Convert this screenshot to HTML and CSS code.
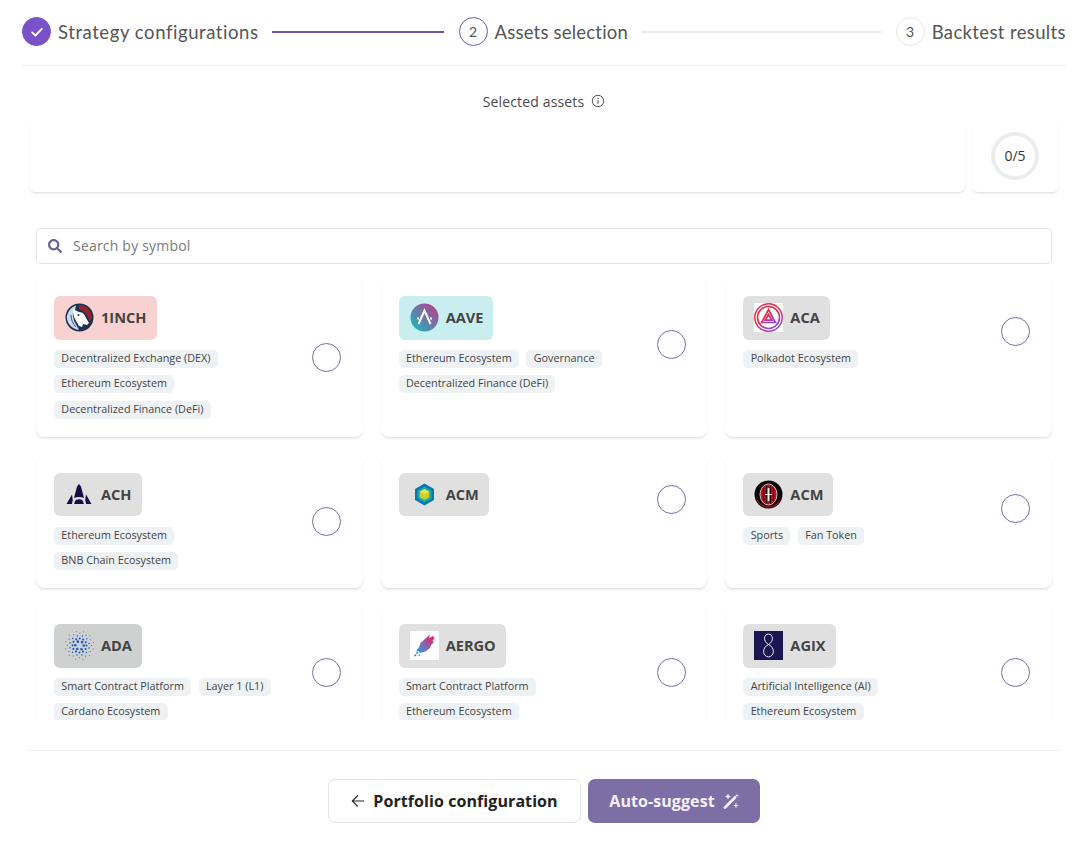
FILE: index.html
```html
<!DOCTYPE html>
<html lang="en">
<head>
<meta charset="utf-8">
<title>Assets selection</title>
<link rel="stylesheet" href="styles.css">
</head>
<body>
<main class="page">
  <nav class="stepper">
    <div class="step">
      <span class="step-dot step-dot--done">
        <svg viewBox="0 0 14 14" width="14" height="14"><path d="M2.2 7.4l3.2 3.1 6.4-6.6" fill="none" stroke="#fff" stroke-width="1.9" stroke-linecap="round" stroke-linejoin="round"/></svg>
      </span>
      <span class="step-label step-label--wide">Strategy configurations</span>
    </div>
    <span class="step-line step-line--done"></span>
    <div class="step">
      <span class="step-dot step-dot--active">2</span>
      <span class="step-label">Assets selection</span>
    </div>
    <span class="step-line"></span>
    <div class="step">
      <span class="step-dot">3</span>
      <span class="step-label step-label--mid">Backtest results</span>
    </div>
  </nav>

  <div class="selected-title">
    <span>Selected assets</span>
    <svg class="info" viewBox="0 0 14 14" width="14" height="14"><circle cx="7" cy="7" r="5.7" fill="none" stroke="#555" stroke-width="1"/><path d="M7 6.2v3.6" stroke="#555" stroke-width="1.1"/><circle cx="7" cy="4.3" r=".7" fill="#555"/></svg>
  </div>

  <section class="selected-row">
    <div class="panel panel--list"></div>
    <div class="panel panel--count"><span class="ring">0/5</span></div>
  </section>

  <label class="search">
    <svg viewBox="0 0 512 512" width="14" height="14"><path fill="#6e6395" d="M505 442.700L405.300 343c-4.500-4.500-10.600-7-17-7H372c27.600-35.300 44-79.700 44-128C416 93.100 322.900 0 208 0S0 93.100 0 208s93.100 208 208 208c48.300 0 92.700-16.400 128-44v16.300c0 6.400 2.500 12.500 7 17l99.700 99.700c9.400 9.400 24.600 9.400 33.900 0l28.300-28.300c9.400-9.400 9.400-24.600.1-34zM208 336c-70.700 0-128-57.200-128-128 0-70.700 57.200-128 128-128 70.700 0 128 57.200 128 128 0 70.700-57.200 128-128 128z"/></svg>
    <span class="search-placeholder">Search by symbol</span>
  </label>

  <section class="assets">
    <div class="asset-grid">

      <article class="card">
        <div class="card-main">
          <div class="card-info">
            <div class="badge badge--pink">
              <svg class="coin" viewBox="0 0 29 29"><circle cx="14.5" cy="14.5" r="14" fill="#1b314f"/><path d="M1.800 14.500C2.300 9 6 4 11 2.500l-1 4.500-2 5 1 6 5 8.800C7 26.500 2.300 20.500 1.800 14.500z" fill="#c9dcec"/><path d="M8 6l6 3c4 0 6 3 7 6l3 5-2 2-4-1-1 3-3-1-3-5-2-4z" fill="#fff"/><path d="M14 2C20 1 26.500 7 27 14l-2 5C23 13 20 8 14 6z" fill="#94242b"/><circle cx="13.500" cy="12" r="1" fill="#1b314f"/><path d="M6 12c0 5 2 9 5 12" stroke="#1b314f" stroke-width=".8" fill="none"/></svg>
              <span class="badge-name">1INCH</span>
            </div>
            <div class="tags">
              <span class="tag">Decentralized Exchange (DEX)</span>
              <span class="tag">Ethereum Ecosystem</span>
              <span class="tag">Decentralized Finance (DeFi)</span>
            </div>
          </div>
          <span class="radio"></span>
        </div>
      </article>

      <article class="card">
        <div class="card-main">
          <div class="card-info">
            <div class="badge badge--teal">
              <svg class="coin" viewBox="0 0 29 29"><defs><linearGradient id="aave" x1="1" y1="0" x2="0" y2="1"><stop offset=".1" stop-color="#b6408f"/><stop offset=".9" stop-color="#1fb3bf"/></linearGradient></defs><circle cx="14.5" cy="14.5" r="14" fill="url(#aave)"/><path d="M8.500 21L14.500 7.500l6 13.500M7 15.500h2M20 15.500h2" fill="none" stroke="#fff" stroke-width="2"/></svg>
              <span class="badge-name">AAVE</span>
            </div>
            <div class="tags">
              <span class="tag">Ethereum Ecosystem</span>
              <span class="tag">Governance</span>
              <span class="tag">Decentralized Finance (DeFi)</span>
            </div>
          </div>
          <span class="radio"></span>
        </div>
      </article>

      <article class="card">
        <div class="card-main">
          <div class="card-info">
            <div class="badge">
              <svg class="coin" viewBox="0 0 29 29"><defs><linearGradient id="aca" x1="0" y1="0" x2=".6" y2="1"><stop offset=".55" stop-color="#e62a48"/><stop offset="1" stop-color="#9a3fd8"/></linearGradient></defs><rect width="29" height="29" fill="#fff"/><circle cx="14.5" cy="14.5" r="13.700" fill="none" stroke="url(#aca)" stroke-width="1.500"/><circle cx="14.5" cy="14.500" r="11" fill="none" stroke="url(#aca)" stroke-width="1.600"/><path d="M14.500 6.500l6.800 13H7.700zM14.500 11.500l3.200 5.700h-6.400z" fill="none" stroke="url(#aca)" stroke-width="1.700"/></svg>
              <span class="badge-name">ACA</span>
            </div>
            <div class="tags">
              <span class="tag">Polkadot Ecosystem</span>
            </div>
          </div>
          <span class="radio"></span>
        </div>
      </article>

      <article class="card">
        <div class="card-main">
          <div class="card-info">
            <div class="badge">
              <svg class="coin" viewBox="0 0 29 29"><path fill="#140f40" d="M14 4l2 2.500 3 11.500c-3-1.500-7-1.500-10 0l3-11.500zM14 19.300c2 0 3.500.7 4 2l.8 2.700H9.200l.8-2.700c.5-1.300 2-2 4-2zM7 14.500L1.500 24h5.300l1-3.800zM21 14.500L26.500 24h-5.300l-1-3.800z"/></svg>
              <span class="badge-name">ACH</span>
            </div>
            <div class="tags">
              <span class="tag">Ethereum Ecosystem</span>
              <span class="tag">BNB Chain Ecosystem</span>
            </div>
          </div>
          <span class="radio"></span>
        </div>
      </article>

      <article class="card">
        <div class="card-main">
          <div class="card-info">
            <div class="badge">
              <svg class="coin" viewBox="0 0 29 29"><path d="M14.500 3.500l9.500 5.500v11l-9.500 5.500L5 20V9z" fill="#0a78ae"/><path d="M14.500 6.500l7 4v8l-7 4-7-4v-8z" fill="#1ba8a8"/><path d="M14.500 9l4.800 2.800v5.400L14.500 20l-4.800-2.800v-5.400z" fill="#c9cf2f"/><path d="M14.500 9l4.800 2.800-4.800 2.700-4.800-2.700z" fill="#e6e24a"/></svg>
              <span class="badge-name">ACM</span>
            </div>
            <div class="tags"></div>
          </div>
          <span class="radio"></span>
        </div>
      </article>

      <article class="card">
        <div class="card-main">
          <div class="card-info">
            <div class="badge">
              <svg class="coin" viewBox="0 0 29 29"><circle cx="14.5" cy="14.5" r="14" fill="#0a0506"/><path d="M3 20a13 13 0 0 0 23 0" fill="none" stroke="#8e1022" stroke-width="1.500"/><ellipse cx="14.5" cy="14.5" rx="8.500" ry="10.500" fill="#b3122a"/><path d="M9.500 8.500v12M12.500 5.500v18M16.500 5.500v18M19.500 8.500v12" stroke="#1a0507" stroke-width="1.200"/><path d="M14.500 8v13" stroke="#f2e8e0" stroke-width="1.800"/><path d="M11 14.500h7" stroke="#f2e8e0" stroke-width="1"/><ellipse cx="14.5" cy="14.5" rx="8.500" ry="10.500" fill="none" stroke="#e0d4c0" stroke-width=".9"/></svg>
              <span class="badge-name">ACM</span>
            </div>
            <div class="tags">
              <span class="tag">Sports</span>
              <span class="tag">Fan Token</span>
            </div>
          </div>
          <span class="radio"></span>
        </div>
      </article>

      <article class="card">
        <div class="card-main">
          <div class="card-info">
            <div class="badge badge--slate">
              <svg class="coin" viewBox="0 0 29 29"><g fill="none" stroke-linecap="round" stroke="#1a5cc4"><circle cx="14.5" cy="14.5" r="4.200" stroke-width="2.600" stroke-dasharray="0 4.398"/><circle cx="14.5" cy="14.5" r="7" stroke-width="2.100" stroke-dasharray="0 3.665"/><circle cx="14.5" cy="14.5" r="9.800" stroke-width="1.500" stroke-dasharray="0 5.131" stroke-dashoffset="2.565"/><circle cx="14.5" cy="14.5" r="12.200" stroke-width="1.100" stroke-dasharray="0 6.388"/><circle cx="14.5" cy="14.5" r="14.200" stroke-width=".9" stroke-dasharray="0 7.435" stroke-dashoffset="3.717"/></g></svg>
              <span class="badge-name">ADA</span>
            </div>
            <div class="tags">
              <span class="tag">Smart Contract Platform</span>
              <span class="tag">Layer 1 (L1)</span>
              <span class="tag">Cardano Ecosystem</span>
            </div>
          </div>
          <span class="radio"></span>
        </div>
      </article>

      <article class="card">
        <div class="card-main">
          <div class="card-info">
            <div class="badge">
              <svg class="coin" viewBox="0 0 29 29"><defs><linearGradient id="aergo" x1="0" y1="1" x2="1" y2="0"><stop offset=".1" stop-color="#17a7d8"/><stop offset=".5" stop-color="#7f6bb5"/><stop offset=".85" stop-color="#e5286e"/></linearGradient></defs><rect width="29" height="29" fill="#fff"/><path fill="url(#aergo)" d="M20 3.500L19 7l4-2 1.500 2-2 3 1.500 1-3 3-1 3-4.500 3.500L10 22l-1.500-2-2.500.5 3-4.500 1.500-4zM6.500 21l2-.5-.5 2-2 .5zM4 24l2-1 .3 2-2 .5zM8.500 24l1.500-.8v1.500l-1.500.5z"/></svg>
              <span class="badge-name">AERGO</span>
            </div>
            <div class="tags">
              <span class="tag">Smart Contract Platform</span>
              <span class="tag">Ethereum Ecosystem</span>
            </div>
          </div>
          <span class="radio"></span>
        </div>
      </article>

      <article class="card">
        <div class="card-main">
          <div class="card-info">
            <div class="badge">
              <svg class="coin" viewBox="0 0 29 29"><rect width="29" height="29" fill="#1b1551"/><path d="M14.500 13.500C9 10.500 9.500 3.500 14.500 3c5 .5 5.500 7.500 0 10.500-6.500 3-6.500 11.500 0 12.500 6.500-1 6.500-9.500 0-12.500z" fill="none" stroke="#fff" stroke-width=".9"/></svg>
              <span class="badge-name">AGIX</span>
            </div>
            <div class="tags">
              <span class="tag">Artificial Intelligence (AI)</span>
              <span class="tag">Ethereum Ecosystem</span>
            </div>
          </div>
          <span class="radio"></span>
        </div>
      </article>

    </div>
  </section>

  <footer class="actions">
    <button class="btn btn--ghost" type="button">
      <svg viewBox="0 0 14 14" width="14" height="14"><path d="M13 7H1.500M6.800 1.500L1.300 7l5.500 5.500" fill="none" stroke="#222" stroke-width="1.100"/></svg>
      <span>Portfolio configuration</span>
    </button>
    <button class="btn btn--primary" type="button">
      <span>Auto-suggest</span>
      <svg viewBox="0 0 16 16" width="16" height="16"><path d="M2 14.500L10 6.500" stroke="#f1eef8" stroke-width="2.800" stroke-linecap="round"/><path d="M10.500 6L12 4.500" stroke="#f1eef8" stroke-width="2.800" stroke-linecap="round"/><path fill="#f1eef8" d="M5 .5l.9 2.100 2.100.9-2.100.9L5 6.500l-.9-2.100L2 3.500l2.100-.9zM14 .5l.5 1.500L16 2.500l-1.500.5-.5 1.500-.5-1.500L12 2.500l1.500-.5zM13 9.500l.8 2.200 2.200.8-2.200.8L13 15.500l-.8-2.200-2.200-.8 2.200-.8z"/></svg>
    </button>
  </footer>
</main>
</body>
</html>
```
FILE: styles.css
```css
* { box-sizing: border-box; }

html, body {
  margin: 0;
  background: #fff;
}

body {
  font-family: "Open Sans", "Liberation Sans", sans-serif;
  color: #444;
}

.page {
  padding: 0 22px;
  height: 861px;
  overflow: hidden;
}

/* stepper */
.stepper {
  display: flex;
  align-items: center;
  height: 66px;
  padding-bottom: 2px;
  border-bottom: 1px solid #eeeeee;
}

.step {
  display: flex;
  align-items: center;
  gap: 7px;
  flex: none;
}

.step-dot {
  width: 29px;
  height: 29px;
  border-radius: 50%;
  border: 1px solid #e8e8e8;
  display: flex;
  align-items: center;
  justify-content: center;
  font-family: "Lato", sans-serif;
  font-size: 14px;
  color: #555;
}

.step-dot--active { border-color: #6d5bb0; }
.step-dot--done { background: #7a52c7; border-color: #7a52c7; }

.step-label {
  font-family: "Lato", sans-serif;
  font-size: 18.5px;
  letter-spacing: .2px;
  color: #555;
  white-space: nowrap;
}

.step-label--wide { letter-spacing: .57px; }
.step-label--mid { letter-spacing: .37px; }

.step-line {
  flex: 1;
  height: 2px;
  margin: 0 15px 0 13px;
  background: #e8e9ea;
}

.step-line--done {
  flex: 0 0 172px;
  background: #6a53a8;
}

/* selected assets */
.selected-title {
  display: flex;
  justify-content: center;
  align-items: center;
  gap: 7px;
  height: 58px;
  padding-top: 12px;
  font-size: 14px;
  letter-spacing: .15px;
  color: #4a4a4a;
}

.info { flex: none; }

.selected-row {
  display: flex;
  gap: 7px;
  height: 68px;
  margin: 0 7px;
}

.panel {
  background: #fff;
  border-radius: 0 0 6px 6px;
  box-shadow: 0 2px 3px -1px rgba(0, 0, 0, .16), 1px 0 2px -1px rgba(0, 0, 0, .06), -1px 0 2px -1px rgba(0, 0, 0, .06);
}

.panel--list { flex: 1; }

.panel--count {
  flex: 0 0 87px;
  display: flex;
  align-items: center;
  justify-content: center;
  padding: 0 1px 5px 0;
}

.ring {
  width: 48px;
  height: 48px;
  border-radius: 50%;
  border: 4.5px solid #ececec;
  display: flex;
  align-items: center;
  justify-content: center;
  font-size: 14px;
  color: #333;
}

/* search */
.search {
  display: flex;
  align-items: center;
  gap: 11px;
  height: 36px;
  margin: 36px 14px 0;
  padding: 0 11px 1px;
  border: 1px solid #e2e4e6;
  border-radius: 5px;
  background: #fff;
}

.search-placeholder {
  font-size: 14px;
  letter-spacing: .2px;
  color: #7a7a7a;
}

/* assets */
.assets {
  height: 442px;
  margin-top: 14px;
  padding: 0 14px;
  overflow: hidden;
}

.asset-grid {
  display: grid;
  grid-template-columns: repeat(3, 1fr);
  gap: 18px;
}

.card {
  padding: 18px 21.8px 18px 18px;
  background: #fff;
  border-radius: 8px;
  box-shadow: 0 2px 3px -1px rgba(0, 0, 0, .16), 1px 0 2px -1px rgba(0, 0, 0, .05), -1px 0 2px -1px rgba(0, 0, 0, .05);
}

.card-main {
  display: flex;
  align-items: center;
  justify-content: space-between;
}

.card-info {
  width: 250px;
}

.badge {
  display: inline-flex;
  align-items: center;
  gap: 7px;
  height: 43.5px;
  padding: 0 10px 0 11px;
  border-radius: 6px;
  background: #e0e0e0;
  font-size: 14.6px;
  font-weight: 700;
  color: #444;
  vertical-align: top;
}

.badge--pink { background: #f8d1d1; }
.badge--teal { background: #c9eef0; }
.badge--slate { background: #cfd1d1; }

.badge-name { margin-bottom: 1.4px; }

.coin {
  width: 29px;
  height: 29px;
  flex: none;
  overflow: visible;
}

.tags {
  display: flex;
  flex-wrap: wrap;
  gap: 7.6px 7.5px;
  margin-top: 10.2px;
}

.tag {
  height: 18px;
  line-height: 16px;
  padding: 0 7.3px;
  border-radius: 5px;
  background: #eef2f5;
  font-size: 10.8px;
  color: #444;
  white-space: nowrap;
}

.radio {
  width: 29px;
  height: 29px;
  flex: none;
  border-radius: 50%;
  border: 1px solid #7a6ba6;
  background: #fff;
}

/* actions */
.actions {
  display: flex;
  justify-content: center;
  gap: 7px;
  margin: 30px 6px 0;
  padding-top: 28px;
  border-top: 1px solid #ececec;
}

.btn {
  display: flex;
  align-items: center;
  justify-content: center;
  gap: 8px;
  height: 44px;
  border-radius: 7px;
  font-family: inherit;
  font-size: 16px;
  font-weight: 700;
  letter-spacing: .08px;
}

.btn--ghost {
  width: 253px;
  background: #fff;
  border: 1px solid #e3e3e6;
  color: #222;
}

.btn--primary {
  width: 172px;
  background: #7d6ea6;
  border: 0;
  color: #f4f2f9;
}
```
